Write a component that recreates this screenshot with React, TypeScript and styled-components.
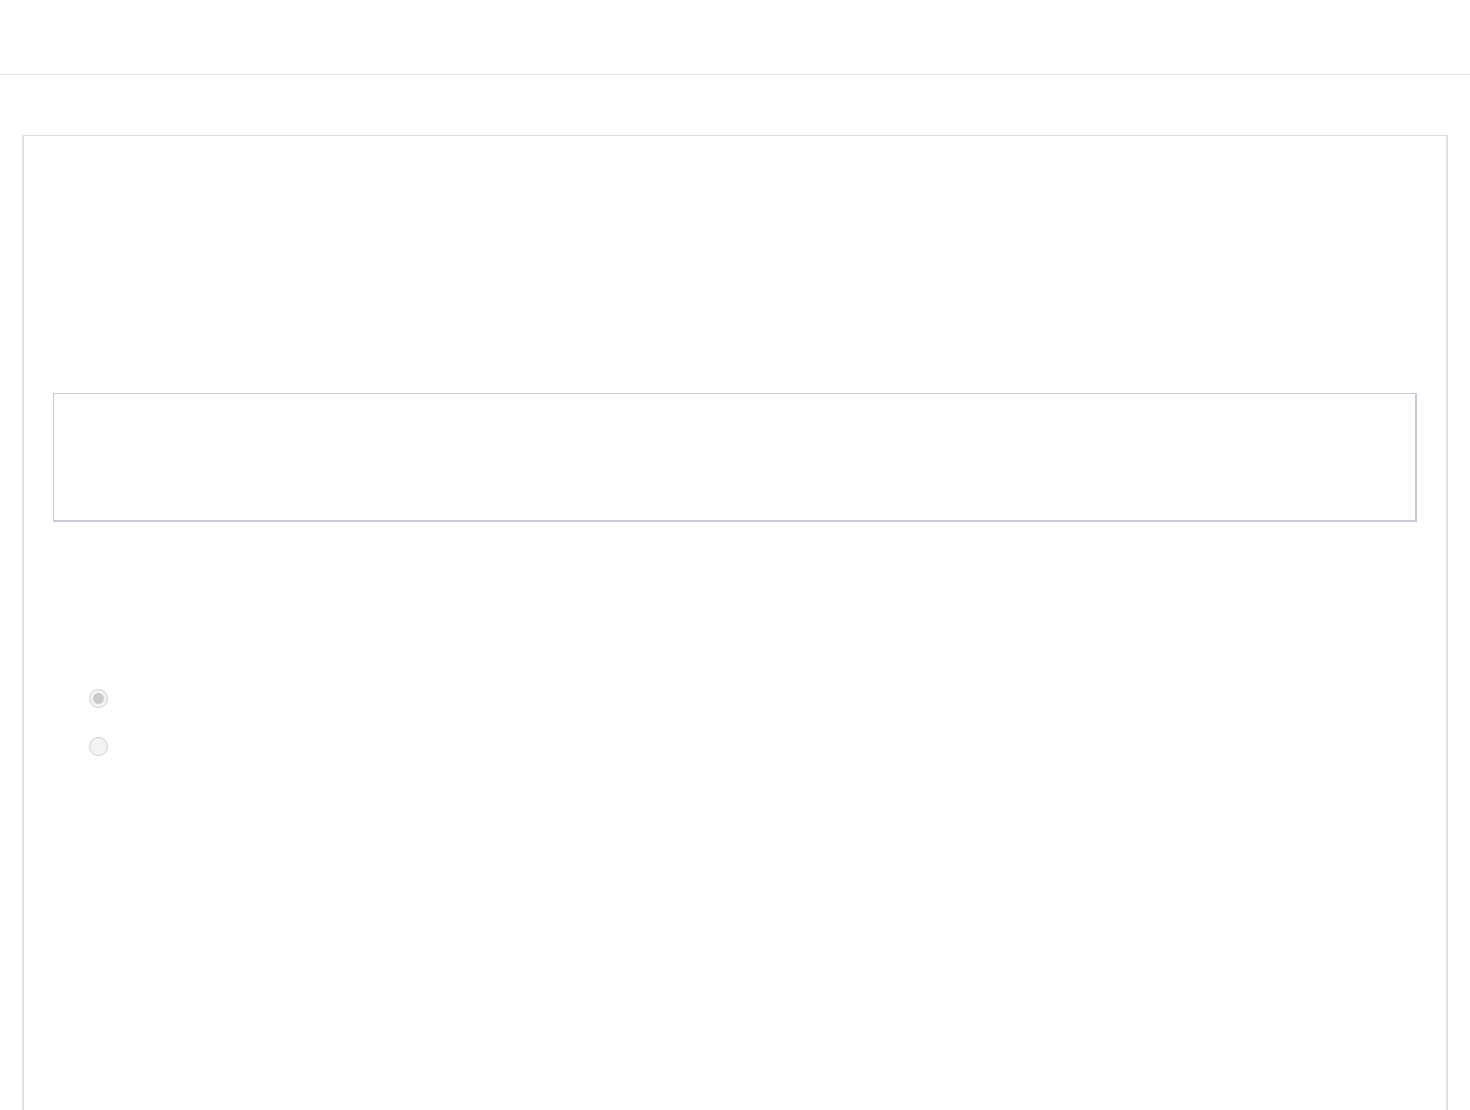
import React from "react";
import styled, { createGlobalStyle } from "styled-components";

const GlobalStyle = createGlobalStyle`
  html, body {
    margin: 0;
    padding: 0;
    background: #ffffff;
    font-family: "Liberation Sans", Arial, sans-serif;
  }
`;

const Header = styled.header`
  height: 75px;
  border-bottom: 1px solid #e2e2e2;
  box-sizing: border-box;
`;

const Main = styled.main`
  padding: 60px 22px 0;
`;

const Card = styled.section`
  min-height: 1100px;
  border: 1px solid #dcdcdc;
  border-left-width: 2px;
  border-right-width: 2px;
  border-left-color: #e0e0e0;
  border-right-color: #e0e0e0;
  box-sizing: border-box;
  padding: 30px 29px;
  display: flex;
  flex-direction: column;
`;

const Intro = styled.div`
  height: 227px;
`;

const Panel = styled.div`
  height: 129px;
  border: 1px solid #c9ccd6;
  border-right-width: 2px;
  border-bottom-width: 2px;
  box-sizing: border-box;
`;

const Options = styled.div`
  margin-top: 167px;
  padding-left: 36px;
  display: flex;
  flex-direction: column;
  gap: 29px;
`;

const Option = styled.label`
  display: flex;
  align-items: center;
  gap: 10px;
  height: 19px;
`;

const Radio = styled.span<{ $checked?: boolean }>`
  width: 19px;
  height: 19px;
  border-radius: 50%;
  border: 1px solid #cfcfcf;
  background: #f3f3f3;
  box-sizing: border-box;
  display: flex;
  align-items: center;
  justify-content: center;

  &::after {
    content: "";
    width: 11px;
    height: 11px;
    border-radius: 50%;
    background: ${({ $checked }) => ($checked ? "#cbcbcb" : "transparent")};
  }
`;

export default function App() {
  return (
    <>
      <GlobalStyle />
      <Header />
      <Main>
        <Card>
          <Intro />
          <Panel />
          <Options>
            <Option>
              <Radio $checked />
            </Option>
            <Option>
              <Radio />
            </Option>
          </Options>
        </Card>
      </Main>
    </>
  );
}
